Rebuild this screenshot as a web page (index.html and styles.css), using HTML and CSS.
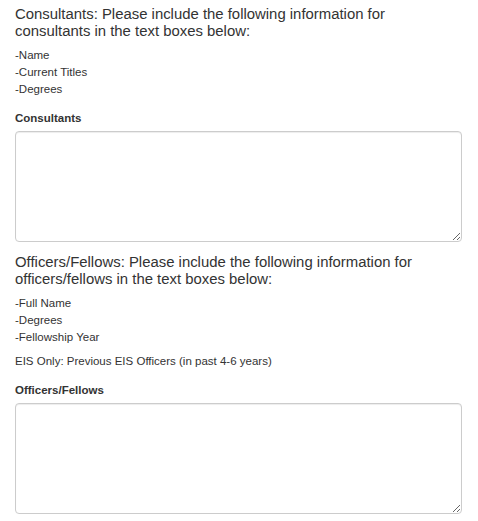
FILE: index.html
```html
<!DOCTYPE html>
<html>
<head>
<meta charset="utf-8">
<link rel="stylesheet" href="styles.css">
</head>
<body>
<div class="page">
  <section class="block">
    <h4 class="intro">Consultants: Please include the following information for consultants in the text boxes below:</h4>
    <p class="list">-Name<br>-Current Titles<br>-Degrees</p>
    <label class="field-label" for="consultants">Consultants</label>
    <textarea id="consultants" class="field"></textarea>
  </section>
  <section class="block">
    <h4 class="intro">Officers/Fellows: Please include the following information for officers/fellows in the text boxes below:</h4>
    <p class="list">-Full Name<br>-Degrees<br>-Fellowship Year</p>
    <p class="note">EIS Only: Previous EIS Officers (in past 4-6 years)</p>
    <label class="field-label" for="officers">Officers/Fellows</label>
    <textarea id="officers" class="field"></textarea>
  </section>
</div>
</body>
</html>
```
FILE: styles.css
```css
html, body {
  margin: 0;
  padding: 0;
  background: #fff;
}
body {
  font-family: "Liberation Sans", Arial, sans-serif;
  color: #333;
  font-size: 11.5px;
  line-height: 17px;
}
.page {
  width: 448px;
  padding: 6px 15px 0 15px;
}
.block {
  display: flex;
  flex-direction: column;
  margin-bottom: 12px;
}
.intro {
  font-size: 14.9px;
  font-weight: normal;
  line-height: 16.5px;
  margin: 0 0 8px 0;
}
.list, .note {
  margin: 0 0 7px 0;
}
.field-label {
  font-weight: bold;
  margin: 5px 0 4px 0;
}
.field {
  display: block;
  box-sizing: border-box;
  width: 447px;
  height: 111px;
  border: 1px solid #ccc;
  border-radius: 4px;
  box-shadow: inset 0 1px 1px rgba(0,0,0,.075);
  padding: 6px 12px;
  margin: 0;
  font-family: inherit;
  font-size: 12px;
  background: #fff;
}
```
